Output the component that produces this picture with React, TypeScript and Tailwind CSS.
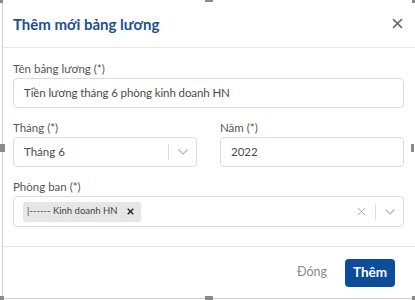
import React from "react";

const Chevron = () => (
  <svg width="12" height="8" viewBox="0 0 12 8" fill="none">
    <path d="M1.5 1.5 6 6l4.5-4.5" stroke="#b5b5b5" strokeWidth="1.1" />
  </svg>
);

const Cross = ({ size, color, width }: { size: number; color: string; width: number }) => (
  <svg width={size} height={size} viewBox="0 0 10 10" fill="none" className="shrink-0">
    <path d="M1 1l8 8M9 1 1 9" stroke={color} strokeWidth={width} />
  </svg>
);

// little grey grip squares around the frame (screenshot artefact)
const Handle = ({ className }: { className: string }) => (
  <div className={"absolute bg-[#8a8a8a] " + className} />
);

export default function App() {
  return (
    <div className="relative w-[415px] h-[300px] overflow-hidden bg-white font-['Lato','Noto_Sans',sans-serif]">
      <div className="ml-[2px] h-[299px] border-l border-b border-[#cfcfcf] flex flex-col">
        {/* header */}
        <div className="h-[48px] flex items-center justify-between pl-[10px] pr-[12px] border-b border-[#e6e6e6]">
          <h2 className="text-[15px] font-bold text-[#1d4e8f] pt-[2px]">Thêm mới bảng lương</h2>
          <Cross size={11} color="#6b6b6b" width={1.4} />
        </div>

        {/* body */}
        <div className="flex-1 pl-[10px] pt-[13px] flex flex-col">
          <label className="text-[11.5px] leading-[16px] text-[#555]">Tên bảng lương (*)</label>
          <div className="mt-[1px] w-[391px] h-[30px] border border-[#dcdcdc] rounded-[4px] flex items-center pl-[10px] text-[11.5px] tracking-[-0.1px] text-[#4a4a4a]">
            Tiền lương tháng 6 phòng kinh doanh HN
          </div>

          <div className="mt-[12px] flex gap-[23px]">
            <div className="flex flex-col">
              <label className="text-[11.5px] leading-[16px] text-[#555]">Tháng (*)</label>
              <div className="mt-[1px] w-[184px] h-[30px] border border-[#dcdcdc] rounded-[4px] flex items-center text-[11.5px] text-[#4a4a4a]">
                <span className="flex-1 pl-[10px]">Tháng 6</span>
                <span className="w-px h-[16px] bg-[#dcdcdc]" />
                <span className="w-[27px] flex justify-center"><Chevron /></span>
              </div>
            </div>
            <div className="flex flex-col">
              <label className="text-[11.5px] leading-[16px] text-[#555]">Năm (*)</label>
              <div className="mt-[1px] w-[184px] h-[30px] border border-[#dcdcdc] rounded-[4px] flex items-center pl-[10px] text-[11.5px] text-[#4a4a4a]">
                2022
              </div>
            </div>
          </div>

          <label className="mt-[12px] text-[11.5px] leading-[16px] text-[#555]">Phòng ban (*)</label>
          <div className="mt-[1px] w-[391px] h-[31px] border border-[#dcdcdc] rounded-[4px] flex items-center pl-[9px] text-[#444]">
            <span className="h-[20px] bg-[#e6e6e6] rounded-[2px] flex items-center pl-[4px] pr-[7px] gap-[9px] text-[9.5px] text-[#444] whitespace-nowrap">
              <span>|------ Kinh doanh HN</span>
              <Cross size={7} color="#222" width={2} />
            </span>
            <span className="flex-1" />
            <span className="mr-[9px]"><Cross size={9} color="#aaa" width={1.1} /></span>
            <span className="w-px h-[16px] bg-[#dcdcdc]" />
            <span className="w-[27px] flex justify-center"><Chevron /></span>
          </div>
        </div>

        {/* footer */}
        <div className="h-[52px] border-t border-[#e6e6e6] flex items-center justify-end gap-[18px] pr-[20px]">
          <button className="text-[12.5px] text-[#8a8a8a]">Đóng</button>
          <button className="h-[28px] w-[50px] rounded-[4px] bg-[#0d4c98] text-white text-[13.5px] font-bold">Thêm</button>
        </div>
      </div>

      <Handle className="left-0 top-0 w-[3px] h-[3px]" />
      <Handle className="left-[205px] top-0 w-[8px] h-[2px]" />
      <Handle className="left-[412px] top-0 w-[3px] h-[3px]" />
      <Handle className="left-0 top-[144px] w-[5px] h-[8px]" />
      <Handle className="left-[411px] top-[144px] w-[3px] h-[8px]" />
      <Handle className="left-0 top-[296px] w-[4px] h-[4px]" />
      <Handle className="left-[205px] top-[296px] w-[8px] h-[4px]" />
      <Handle className="left-[412px] top-[296px] w-[3px] h-[4px]" />
    </div>
  );
}
